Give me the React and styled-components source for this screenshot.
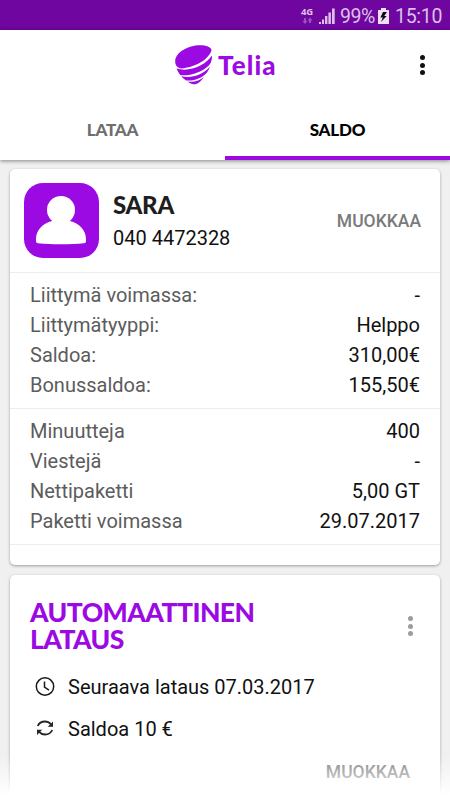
import React from 'react';
import styled, { createGlobalStyle } from 'styled-components';

const GlobalStyle = createGlobalStyle`
  * {
    box-sizing: border-box;
  }
  body {
    margin: 0;
    background: #f0f0f0;
    font-family: Roboto, "Liberation Sans", sans-serif;
  }
`;

const Screen = styled.div`
  position: relative;
  width: 450px;
  height: 800px;
  overflow: hidden;
  background: #f0f0f0;
`;

const StatusBar = styled.div`
  height: 30px;
  padding: 2px 8px 0 0;
  background: #6e069f;
  color: #dcc0e9;
  display: flex;
  justify-content: flex-end;
  align-items: center;
  font-size: 19.5px;
  svg {
    display: block;
  }
`;

const Network = styled.div`
  width: 14px;
  height: 21px;
  margin-right: 4px;
  font: bold 9.5px/11px "Open Sans", sans-serif;
  letter-spacing: -0.2px;
  svg {
    margin: 0 0 0 1px;
  }
`;

const Percent = styled.span`
  width: 35px;
  margin: 0 3px 0 5px;
  letter-spacing: -0.4px;
`;

const Clock = styled.span`
  width: 47px;
  margin-left: 6px;
  letter-spacing: -0.3px;
  white-space: nowrap;
`;

const Top = styled.div`
  position: relative;
  height: 130px;
  background: #fff;
  box-shadow: 0 1px 4px rgba(0, 0, 0, 0.45);
`;

const Header = styled.div`
  height: 70px;
  padding: 0 24px 0 174px;
  display: flex;
  justify-content: space-between;
  align-items: center;
`;

const Brand = styled.div`
  display: flex;
  align-items: center;
  svg {
    display: block;
  }
`;

const BrandName = styled.span`
  margin: 0 0 0 5px;
  font: 900 26px/30px Lato, sans-serif;
  letter-spacing: 1.1px;
  color: #9b0ae2;
`;

const Dots = styled.div`
  width: 6px;
  display: flex;
  flex-direction: column;
  gap: 2.5px;
  &::before, &::after, i {
    content: '';
    display: block;
    width: 5px;
    height: 5px;
    border-radius: 50%;
    background: ${props => props.color};
  }
`;

const Tabs = styled.div`
  display: flex;
  height: 60px;
`;

const Tab = styled.div`
  width: 50%;
  padding-top: 2px;
  border-bottom: 4px solid ${props => props.$active ? '#9b0ae2' : 'transparent'};
  display: flex;
  align-items: center;
  justify-content: center;
  font: 900 17px Lato, sans-serif;
  letter-spacing: -0.2px;
  color: ${props => props.$active ? '#000' : '#6e6e6e'};
`;

const Cards = styled.div`
  padding: 9px 10px 0;
`;

const Card = styled.div`
  height: ${props => props.height};
  margin-bottom: 10px;
  background: #fff;
  border-radius: 5px;
  box-shadow: 0 1px 3px rgba(0, 0, 0, 0.35);
`;

const Person = styled.div`
  height: 103px;
  padding: 0 19px 0 14px;
  display: flex;
  align-items: center;
`;

const Avatar = styled.div`
  width: 75px;
  height: 75px;
  border-radius: 19px;
  background: #9b0ae2;
`;

const PersonText = styled.div`
  flex: 1;
  padding: 1px 0 0 14px;
`;

const Name = styled.div`
  font: 900 24px/34px Lato, sans-serif;
  letter-spacing: -0.3px;
  color: #1e1e1e;
`;

const Phone = styled.div`
  font-size: 20px;
  line-height: 32px;
  color: #111;
`;

const Action = styled.span`
  font-size: 17.5px;
  font-weight: 500;
  color: #7a7a7a;
`;

const Section = styled.div`
  padding: 7px 20px 8px;
  border-top: 1px solid #ececec;
`;

const Row = styled.div`
  height: 30px;
  display: flex;
  justify-content: space-between;
  align-items: center;
  font-size: 20px;
`;

const Label = styled.span`
  color: #5c5c5c;
`;

const Value = styled.span`
  color: #111;
`;

const Footer = styled.div`
  border-top: 1px solid #ececec;
`;

const TopUpHeader = styled.div`
  padding: 24px 26px 0 20px;
  display: flex;
  justify-content: space-between;
  align-items: center;
`;

const Title = styled.h2`
  width: 260px;
  margin: 0;
  font: 900 26.5px/27px Lato, sans-serif;
  letter-spacing: -0.55px;
  color: #9b0ae2;
`;

const Detail = styled.div`
  height: 42px;
  padding-left: 25px;
  display: flex;
  align-items: center;
  font-size: 20px;
  color: #111;
  svg {
    display: block;
    margin-right: 13px;
  }
`;

const Details = styled.div`
  padding-top: 13px;
`;

const CardAction = styled.div`
  padding: 12px 30px 0;
  text-align: right;
`;

const Fade = styled.div`
  position: absolute;
  left: 0;
  right: 0;
  bottom: 0;
  height: 45px;
  background: linear-gradient(rgba(255, 255, 255, 0), #fff 90%);
`;

const subscription = [
  ['Liittymä voimassa:', '-'],
  ['Liittymätyyppi:', 'Helppo'],
  ['Saldoa:', '310,00€'],
  ['Bonussaldoa:', '155,50€'],
];

const usage = [
  ['Minuutteja', '400'],
  ['Viestejä', '-'],
  ['Nettipaketti', '5,00 GT'],
  ['Paketti voimassa', '29.07.2017'],
];

const DataArrows = () => (
  <svg width="11" height="8" viewBox="0 0 11 8" fill="#9c52bd">
    <path d="M2 1h2v3h1.6L3 7 .4 4H2zM7 6V3.4H5.5L8 .6l2.6 2.8H9V6z" />
  </svg>
);

const Signal = () => (
  <svg width="16" height="16" viewBox="0 0 16 16" fill="#dcc0e9">
    <path d="M0 14h2v2H0zM3 11.5h2V16H3zM6 8h2.4v8H6zM9.400 4.5h2.500v11.500H9.400zM13 .5h2.700v15.500H13z" />
  </svg>
);

const Battery = () => (
  <svg width="11" height="16" viewBox="0 0 11 16">
    <path d="M3 0h5v2h2.500q.5 0 .5.6V16H0V2.600Q0 2 .5 2H3z" fill="#eddff4" />
    <path d="M5 4 2.400 9.500h2.400L3 14l5.700-6H6.200L9 4z" fill="#15051d" />
  </svg>
);

const TeliaMark = () => (
  <svg width="39" height="42" viewBox="0 0 39 42" fill="#9b0ae2">
    <path d="M1.200 17C1.500 8.500 14 1.200 26 1.200c6.500 0 11 1.800 11.500 4.800C36 13.500 24 23 7 24.500 3 23.500 1 21 1.200 17z" />
    <path d="M38 11.500c.1 2.500-.4 5-1.200 7.200C32 26.500 19 32 6.500 31.300 4.800 29.500 3.500 27 2.600 24.600 16 28.500 31.500 21 38 11.500z" />
    <path d="M36 22.500c-.8 2.300-1.800 4.300-3 6-4.500 5.500-13 8.800-20.800 7.900-1.900-1-3.500-2.300-4.900-4.100C17.500 34.500 29 31 36 22.500z" />
    <path d="M30 33c-2.200 3.500-6 7.300-10.200 7.300-2 0-4-1.100-6-2.800C20 38.600 25.500 36.700 30 33z" />
  </svg>
);

const UserShape = () => (
  <svg width="75" height="75" viewBox="0 0 75 75" fill="#fff">
    <circle cx="37" cy="27" r="14" />
    <path d="M28 35v3c-9 2-16 9-16 18v2c0 1.500.6 2 2 2.300 14 1.400 32 1.400 46 0 1.500-.3 2-.8 2-2.300v-2c0-9-7-16-16-18v-3z" />
  </svg>
);

const ClockIcon = () => (
  <svg width="20" height="20" viewBox="0 0 20 20" fill="none" stroke="#1a1a1a" strokeWidth="1.5">
    <circle cx="10" cy="9.500" r="8.700" />
    <path d="M9.500 4.500V10l4.500 3.200" />
  </svg>
);

const RefreshIcon = () => (
  <svg width="20" height="20" viewBox="0 0 20 20" fill="none" stroke="#252525" strokeWidth="1.800">
    <path d="M2.800 7C4 4 6.500 2.500 10 2.500c2.400 0 4.300.9 5.800 2.700M17.200 11c-1.200 3-3.700 4.500-7.200 4.500-2.400 0-4.300-.9-5.800-2.700" />
    <path d="M18 2.500v5.200h-5.200zM2 16v-5.200h5.200z" fill="#252525" stroke="none" />
  </svg>
);

const Rows = ({ items }) => (
  <Section>
    {items.map(([label, value]) => (
      <Row key={label}>
        <Label>{label}</Label>
        <Value>{value}</Value>
      </Row>
    ))}
  </Section>
);

const App = () => (
  <Screen>
    <GlobalStyle />
    <StatusBar>
      <Network>4G<DataArrows /></Network>
      <Signal />
      <Percent>99%</Percent>
      <Battery />
      <Clock>15:10</Clock>
    </StatusBar>
    <Top>
      <Header>
        <Brand>
          <TeliaMark />
          <BrandName>Telia</BrandName>
        </Brand>
        <Dots color="#111"><i /></Dots>
      </Header>
      <Tabs>
        <Tab>LATAA</Tab>
        <Tab $active>SALDO</Tab>
      </Tabs>
    </Top>
    <Cards>
      <Card height="396px">
        <Person>
          <Avatar><UserShape /></Avatar>
          <PersonText>
            <Name>SARA</Name>
            <Phone>040 4472328</Phone>
          </PersonText>
          <Action>MUOKKAA</Action>
        </Person>
        <Rows items={subscription} />
        <Rows items={usage} />
        <Footer />
      </Card>
      <Card height="260px">
        <TopUpHeader>
          <Title>AUTOMAATTINEN LATAUS</Title>
          <Dots color="#9c9c9c"><i /></Dots>
        </TopUpHeader>
        <Details>
          <Detail><ClockIcon />Seuraava lataus 07.03.2017</Detail>
          <Detail><RefreshIcon />Saldoa 10 €</Detail>
        </Details>
        <CardAction><Action>MUOKKAA</Action></CardAction>
      </Card>
    </Cards>
    <Fade />
  </Screen>
);

export default App;
